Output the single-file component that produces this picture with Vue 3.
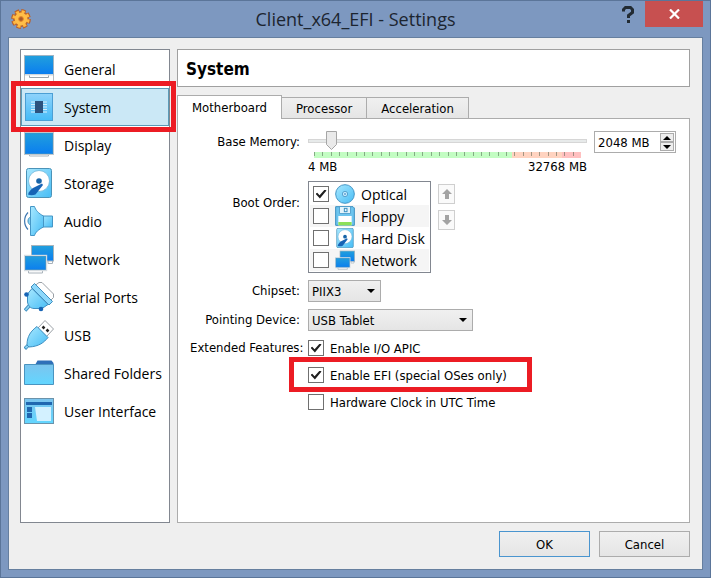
<script setup>
import { ref } from 'vue'

const sections = [
  { id: 'general', label: 'General' },
  { id: 'system', label: 'System' },
  { id: 'display', label: 'Display' },
  { id: 'storage', label: 'Storage' },
  { id: 'audio', label: 'Audio' },
  { id: 'network', label: 'Network' },
  { id: 'serial', label: 'Serial Ports' },
  { id: 'usb', label: 'USB' },
  { id: 'folder', label: 'Shared Folders' },
  { id: 'interface', label: 'User Interface' },
]
const activeSection = ref('system')

const tabs = ['Motherboard', 'Processor', 'Acceleration']
const activeTab = ref('Motherboard')

const memory = ref(2048)

const bootOrder = ref([
  { icon: 'optical', label: 'Optical', enabled: true },
  { icon: 'floppy', label: 'Floppy', enabled: false },
  { icon: 'storage', label: 'Hard Disk', enabled: false },
  { icon: 'network', label: 'Network', enabled: false },
])

const chipset = ref('PIIX3')
const pointing = ref('USB Tablet')

const features = ref([
  { label: 'Enable I/O APIC', enabled: true, marked: false },
  { label: 'Enable EFI (special OSes only)', enabled: true, marked: true },
  { label: 'Hardware Clock in UTC Time', enabled: false, marked: false },
])

function stepMemory(delta) {
  memory.value = Math.min(32768, Math.max(4, Number(memory.value) + delta))
}
</script>

<template>
  <div class="window">
    <svg class="sprite" aria-hidden="true">
      <defs>
        <linearGradient id="screen" x1="0" y1="0" x2="0" y2="1">
          <stop offset="0" stop-color="#22a0dc" />
          <stop offset="1" stop-color="#0a7df0" />
        </linearGradient>
        <linearGradient id="sky" x1="0" y1="0" x2="1" y2="1">
          <stop offset="0" stop-color="#a8e8ff" />
          <stop offset="1" stop-color="#48bdf5" />
        </linearGradient>
        <linearGradient id="skyDown" x1="0" y1="0" x2="0" y2="1">
          <stop offset="0" stop-color="#7cc4ee" />
          <stop offset="1" stop-color="#62d6ff" />
        </linearGradient>
        <linearGradient id="chip" x1="0" y1="0" x2="0" y2="1">
          <stop offset="0" stop-color="#8fd3fb" />
          <stop offset="1" stop-color="#44bbf7" />
        </linearGradient>
      </defs>
      <symbol id="general" viewBox="0 0 30 30">
        <rect x="0.5" y="19" width="29" height="10.5" fill="#fff" stroke="#b8bcc0" />
        <rect x="0.5" y="1.5" width="29" height="19" fill="url(#screen)" stroke="#9fb4c4" />
        <path d="M1 21h28" stroke="#dfe3e6" stroke-width="1.5" />
        <path d="M5.5 21.5v2h19v-2" fill="#fff" stroke="#9aa3ab" />
      </symbol>
      <symbol id="system" viewBox="0 0 30 30">
        <rect x="1.5" y="1.5" width="27" height="27" fill="url(#chip)" stroke="#4c9fd4" />
        <path d="M7 10h16M7 12.5h16M7 15h16M7 17.5h16M7 20h16" stroke="#d7effb" />
        <rect x="11" y="9" width="8" height="12" fill="#2d527d" />
      </symbol>
      <symbol id="display" viewBox="0 0 30 30">
        <path d="M5.500 23.5h19v2.500h-19z" fill="#fff" stroke="#a8b2ba" />
        <rect x="0.5" y="2.500" width="29" height="22" fill="url(#screen)" stroke="#c0c8cd" />
        <rect x="1.5" y="3.500" width="27" height="20" fill="none" stroke="#3c93ca" stroke-width="0.6" />
      </symbol>
      <symbol id="storage" viewBox="0 0 30 30">
        <rect x="2.5" y="0.5" width="25" height="29" rx="2" fill="url(#sky)" stroke="#4b93b8" />
        <circle cx="15" cy="13" r="10.5" fill="#fff" stroke="#6fb6da" stroke-width="0.8" />
        <path d="M18 15.500l1 1.500-7.500 9.500c-2.500 1-5.500 1-7.500 0 1-3 3-5.500 6-7z" fill="#1764b5" />
        <circle cx="15" cy="13" r="2.800" fill="#1764a8" />
      </symbol>
      <symbol id="audio" viewBox="0 0 30 30">
        <path d="M4 6.500C-.5 11-.5 19 4 23.500" fill="none" stroke="#3c76b0" stroke-width="1.200" />
        <path d="M7 11c-4 .5-4 7.500 0 8z" fill="#8bd3f2" stroke="#3f8fc0" />
        <path d="M18 10h10.500v11H18z" fill="url(#sky)" stroke="#4596c6" />
        <path d="M6.500.500h4c1 3.500 4 7 9 9.500v11c-5 2.500-8 5-9 8.500h-4z" fill="url(#sky)" stroke="#4596c6" />
      </symbol>
      <symbol id="network" viewBox="0 0 30 30">
        <path d="M24 16.500v3h4.500v-3" fill="#fff" stroke="#a8b2ba" />
        <rect x="7.500" y="1.500" width="22" height="15.500" fill="url(#screen)" stroke="#a8b4bc" />
        <path d="M4.500 26.500h14v2.500h-14z" fill="#fff" stroke="#a8b2ba" />
        <rect x="0.500" y="11.500" width="22" height="15" fill="url(#screen)" stroke="#d4dbe0" stroke-width="1.400" />
        <rect x="1.500" y="12.500" width="20" height="13" fill="none" stroke="#3c8cc0" stroke-width="0.600" />
      </symbol>
      <symbol id="serial" viewBox="0 0 30 30">
        <path d="M11 3.500l4-3h3L29.500 12v3.500l-4 4z" fill="#fff" stroke="#9aa0a6" />
        <path d="M5.500 23.500L1 28.500" stroke="#3f8fc0" stroke-width="3.500" />
        <path d="M5.500 23.500L1.500 28" stroke="#8bd3f2" stroke-width="1.800" />
        <path d="M8 6.500L24 22.500 18 26.500H10C6 26.500 4 23 3.500 20V12z" fill="url(#sky)" stroke="#3f8fc0" />
        <path d="M10.500 1.500L28.500 19.500l-3.500 3.500L7 5z" fill="#8dd8fb" stroke="#3f8fc0" />
        <circle cx="2.500" cy="12.500" r="2.300" fill="#1764b5" />
        <circle cx="17" cy="27" r="2.300" fill="#1764b5" />
      </symbol>
      <symbol id="usb" viewBox="0 0 30 30">
        <path d="M21 .500L29.500 9l-7 7.500L14 8z" fill="#fff" stroke="#9aa0a6" />
        <path d="M18.500 6.500l2 2M22.500 9.500l2 2" stroke="#222" stroke-width="2.500" />
        <path d="M4 25.500L.8 28.700" stroke="#3f8fc0" stroke-width="3.500" />
        <path d="M4 25.500L1.500 28" stroke="#8bd3f2" stroke-width="1.800" />
        <path d="M13 6.500L24 17.500c-4 5-9 9-19 9.500l-2-2C3 16 7 11 13 6.500z" fill="url(#sky)" stroke="#3f8fc0" />
      </symbol>
      <symbol id="folder" viewBox="0 0 30 30">
        <path d="M11 7l2.500-4.500h14l2 2.500v4H11z" fill="#2f6fb8" />
        <path d="M.5 6.500h29v20H.5z" fill="url(#skyDown)" stroke="#4a94c0" />
      </symbol>
      <symbol id="interface" viewBox="0 0 30 30">
        <rect x="0.5" y="2.500" width="29" height="25" fill="url(#skyDown)" stroke="#6b93ab" />
        <rect x="2" y="6" width="26" height="3" fill="#2067b0" />
        <rect x="3" y="11" width="5" height="5" fill="#2067b0" />
        <rect x="3" y="17" width="5" height="5" fill="#2067b0" />
        <path d="M11 11h16v14H13z" fill="#d3f1ff" />
      </symbol>
      <symbol id="optical" viewBox="0 0 30 30">
        <circle cx="15" cy="15" r="14" fill="url(#sky)" stroke="#4596c6" stroke-width="1.500" />
        <circle cx="15" cy="15" r="4" fill="#bfe9fb" stroke="#4596c6" stroke-width="1.200" />
        <circle cx="15" cy="15" r="1.200" fill="#2f6fb8" />
      </symbol>
      <symbol id="floppy" viewBox="0 0 30 30">
        <path d="M1 1h26l2 2v26H1z" fill="#6cc4ee" stroke="#3b8fc0" stroke-width="1.500" />
        <rect x="7" y="1" width="16" height="10" fill="#e3f4fc" stroke="#3b8fc0" />
        <rect x="14" y="3.500" width="4" height="5" fill="#e3f4fc" stroke="#3b8fc0" stroke-width="1.500" />
        <rect x="5" y="15" width="20" height="14" fill="#fff" />
        <rect x="5" y="24" width="20" height="5" fill="#8be05a" />
      </symbol>
    </svg>

    <header class="titlebar">
      <svg class="gear" viewBox="0 0 20 20" aria-hidden="true">
        <circle cx="10" cy="10" r="8" fill="#b9622c" />
        <circle cx="10" cy="10" r="8.200" fill="none" stroke="#b9622c" stroke-width="3.400" stroke-dasharray="4.400 2.040" />
        <circle cx="10" cy="10" r="7.200" fill="none" stroke="#ffb840" stroke-width="3" stroke-dasharray="3 2.655" stroke-dashoffset="-.4" />
        <circle cx="10" cy="10" r="6.400" fill="#ffbe48" />
        <circle cx="10" cy="10" r="2.400" fill="#a85a2a" stroke="#e88a2a" />
      </svg>
      <h1 class="title">Client_x64_EFI - Settings</h1>
      <div class="window-buttons">
        <button class="help" type="button" aria-label="Help">
          <svg viewBox="0 0 12 17" aria-hidden="true">
            <path d="M1.500 5.500V3.500L3.500 1.500h5l2 2v3L6.500 9.500V12M5 15.500h3" fill="none" stroke="#222b33" stroke-width="3" />
          </svg>
        </button>
        <button class="close" type="button" aria-label="Close">
          <svg viewBox="0 0 11 10" aria-hidden="true">
            <path d="M1 .500l9 9M10 .500l-9 9" stroke="#fff" stroke-width="2.200" />
          </svg>
        </button>
      </div>
    </header>

    <div class="client">
      <div class="body">
        <nav class="sidebar">
          <button
            v-for="s in sections"
            :key="s.id"
            type="button"
            :class="['section', { 'section--active': s.id === activeSection }]"
            @click="activeSection = s.id"
          >
            <svg class="section-icon" aria-hidden="true"><use :href="'#' + s.id" /></svg>
            <span>{{ s.label }}</span>
          </button>
        </nav>

        <main class="main">
          <h2 class="heading">System</h2>

          <div class="tabs" role="tablist">
            <button
              v-for="t in tabs"
              :key="t"
              type="button"
              role="tab"
              :aria-selected="t === activeTab"
              :class="['tab', { 'tab--active': t === activeTab }]"
              @click="activeTab = t"
            >
              {{ t }}
            </button>
          </div>

          <section class="panel">
            <label class="label" for="memory">Base Memory:</label>
            <div class="memory">
              <div class="memory-slider">
                <input id="memory" v-model="memory" class="range" type="range" min="4" max="32768" />
                <div class="scale">
                  <span v-for="n in 32" :key="n" class="tick"></span>
                </div>
                <div class="limits">
                  <span>4 MB</span>
                  <span>32768 MB</span>
                </div>
              </div>
              <div class="spin">
                <input class="spin-input" type="text" :value="memory + ' MB'" aria-label="Base memory size" />
                <div class="spin-buttons">
                  <button type="button" aria-label="Increase" @click="stepMemory(4)">
                    <svg viewBox="0 0 8 4" aria-hidden="true"><path d="M4 0l4 4H0z" /></svg>
                  </button>
                  <button type="button" aria-label="Decrease" @click="stepMemory(-4)">
                    <svg viewBox="0 0 8 4" aria-hidden="true"><path d="M0 0h8L4 4z" /></svg>
                  </button>
                </div>
              </div>
            </div>

            <span class="label label--boot">Boot Order:</span>
            <div class="boot">
              <div class="boot-list">
                <label v-for="d in bootOrder" :key="d.label" class="boot-item">
                  <input v-model="d.enabled" class="check" type="checkbox" />
                  <svg class="boot-icon" aria-hidden="true"><use :href="'#' + d.icon" /></svg>
                  <span>{{ d.label }}</span>
                </label>
              </div>
              <div class="boot-moves">
                <button type="button" class="move" aria-label="Move up">
                  <svg viewBox="0 0 10 10" aria-hidden="true"><path d="M5 0l5 5H7v5H3V5H0z" /></svg>
                </button>
                <button type="button" class="move" aria-label="Move down">
                  <svg viewBox="0 0 10 10" aria-hidden="true"><path d="M5 10l5-5H7V0H3v5H0z" /></svg>
                </button>
              </div>
            </div>

            <label class="label" for="chipset">Chipset:</label>
            <select id="chipset" v-model="chipset" class="select select--short">
              <option>PIIX3</option>
              <option>ICH9</option>
            </select>

            <label class="label" for="pointing">Pointing Device:</label>
            <select id="pointing" v-model="pointing" class="select">
              <option>USB Tablet</option>
              <option>PS/2 Mouse</option>
            </select>

            <span class="label label--features">Extended Features:</span>
            <div class="features">
              <label
                v-for="f in features"
                :key="f.label"
                :class="['feature', { 'feature--marked': f.marked }]"
              >
                <input v-model="f.enabled" class="check" type="checkbox" />
                <span>{{ f.label }}</span>
              </label>
            </div>
          </section>
        </main>
      </div>

      <footer class="actions">
        <button type="button" class="action action--default">OK</button>
        <button type="button" class="action">Cancel</button>
      </footer>
    </div>
  </div>
</template>

<style>
body {
  margin: 0;
}
</style>

<style scoped>
* {
  box-sizing: border-box;
}

.window {
  min-height: 100vh;
  display: flex;
  flex-direction: column;
  padding: 0 7px 7px;
  border: 1px solid #5b7599;
  background: #7d98c0;
  color: #000;
  font-family: "DejaVu Sans Condensed", "Noto Sans", sans-serif;
  font-size: 13px;
}

button,
input,
select {
  margin: 0;
  padding: 0;
  font: inherit;
  color: inherit;
}

.sprite {
  position: absolute;
  width: 0;
  height: 0;
}

.titlebar {
  height: 36px;
  display: grid;
  grid-template-columns: 1fr auto 1fr;
  align-items: center;
}

.gear {
  width: 20px;
  height: 20px;
  margin-left: 3px;
}

.title {
  margin: 0;
  font: 18px "Open Sans", sans-serif;
  color: #1c2530;
}

.window-buttons {
  align-self: start;
  display: flex;
  justify-content: flex-end;
  gap: 10px;
}

.help {
  width: 14px;
  height: 26px;
  display: grid;
  place-items: center;
  border: 0;
  background: none;
}

.help svg {
  width: 12px;
  height: 17px;
}

.close {
  width: 58px;
  height: 26px;
  display: grid;
  place-items: center;
  border: 0;
  background: #c75050;
}

.close svg {
  width: 11px;
  height: 10px;
}

.client {
  flex: 1;
  display: flex;
  flex-direction: column;
  gap: 8px;
  padding: 11px 12px 12px 11px;
  border: 1px solid #667f9f;
  background: #efefef;
}

.body {
  flex: 1;
  display: grid;
  grid-template-columns: 150px minmax(0, 1fr);
  gap: 7px;
}

.sidebar {
  border: 1px solid #828790;
  background: #fff;
}

.section {
  position: relative;
  width: 100%;
  height: 38px;
  display: flex;
  align-items: center;
  gap: 10px;
  padding: 0 2px;
  border: 1px solid transparent;
  background: none;
  font-family: "Open Sans", sans-serif;
  font-size: 14px;
  white-space: nowrap;
}

.section--active {
  border-color: #5c9bb8;
  background: #cbe8f6;
}

.section--active::after {
  content: "";
  position: absolute;
  z-index: 1;
  inset: -8px -8px -7px -11px;
  border: 5px solid #ec1c24;
}

.section-icon {
  flex: none;
  width: 30px;
  height: 30px;
}

.main {
  display: flex;
  flex-direction: column;
}

.heading {
  height: 38px;
  margin: 0 0 8px;
  padding: 0 8px;
  border: 1px solid #a0a0a0;
  background: #fff;
  font-size: 17px;
  line-height: 38px;
}

.tabs {
  display: flex;
  align-items: flex-end;
}

.tab {
  height: 21px;
  margin-right: -1px;
  padding: 0 14px;
  border: 1px solid #acacac;
  border-bottom: 0;
  background: linear-gradient(#f0f0f0, #e5e5e5);
}

.tab--active {
  position: relative;
  height: 24px;
  margin-bottom: -1px;
  background: #fff;
}

.panel {
  flex: 1;
  display: grid;
  grid-template-columns: 110px minmax(0, 1fr);
  align-content: start;
  gap: 7px 8px;
  padding: 12px 13px 12px 12px;
  border: 1px solid #acacac;
  background: #fff;
}

.label {
  line-height: 22px;
  text-align: right;
  white-space: nowrap;
}

.label--boot {
  padding-top: 11px;
}

.label--features {
  line-height: 20px;
}

.memory {
  display: flex;
  align-items: flex-start;
  gap: 7px;
}

.memory-slider {
  flex: 1;
}

.range {
  appearance: none;
  display: block;
  width: 100%;
  height: 20px;
  background: none;
}

.range::-webkit-slider-runnable-track {
  height: 4px;
  border: 1px solid #d6d6d6;
  background: #e7eaea;
}

.range::-webkit-slider-thumb {
  appearance: none;
  width: 11px;
  height: 19px;
  margin-top: -9px;
  background: url("data:image/svg+xml,%3Csvg xmlns='http://www.w3.org/2000/svg' viewBox='0 0 11 19'%3E%3Cpath d='M.5.5h10v13l-5 5-5-5z' fill='%23eaeaea' stroke='%23a6a6a6'/%3E%3C/svg%3E");
}

.scale {
  display: flex;
  height: 6px;
  margin: 1px 6px 0;
  background: linear-gradient(90deg, #c3fdc3 0 74%, #ffd3c0 74% 93%, #ffc0c0 93%);
}

.tick {
  flex: 1;
  height: 4px;
  border-left: 1px solid rgba(70, 90, 70, 0.5);
}

.limits {
  display: flex;
  justify-content: space-between;
  padding-top: 1px;
  line-height: 15px;
}

.spin {
  width: 82px;
  height: 22px;
  display: flex;
  padding: 1px;
  border: 1px solid #acacac;
}

.spin-input {
  flex: 1;
  min-width: 0;
  padding-left: 2px;
  border: 0;
  background: none;
}

.spin-buttons {
  width: 14px;
  display: flex;
  flex-direction: column;
}

.spin-buttons button {
  flex: 1;
  display: grid;
  place-items: center;
  border: 1px solid #acacac;
  background: #eee;
}

.spin-buttons svg {
  width: 8px;
  height: 4px;
}

.boot {
  display: flex;
  align-items: flex-start;
  gap: 7px;
}

.boot-list {
  width: 123px;
  padding: 1px;
  border: 1px solid #828790;
}

.boot-item {
  height: 22px;
  display: flex;
  align-items: center;
  gap: 6px;
  padding-left: 3px;
  font-family: "Open Sans", sans-serif;
  font-size: 14px;
  white-space: nowrap;
}

.boot-item:nth-child(even) {
  background: #f5f5f5;
}

.boot-icon {
  flex: none;
  width: 20px;
  height: 20px;
}

.boot-moves {
  display: flex;
  flex-direction: column;
  gap: 6px;
  padding-top: 3px;
}

.move {
  width: 17px;
  height: 20px;
  display: grid;
  place-items: center;
  border: 1px solid #cfcfcf;
  background: #fafafa;
}

.move svg {
  width: 10px;
  height: 10px;
  fill: #a3a3a3;
}

.check {
  appearance: none;
  flex: none;
  width: 16px;
  height: 16px;
  display: grid;
  place-items: center;
  border: 1px solid #707070;
  background: #fff;
}

.check:checked::before {
  content: "";
  width: 11px;
  height: 9px;
  background: #1f1f1f;
  clip-path: polygon(0 48%, 16% 36%, 37% 64%, 84% 0, 100% 12%, 40% 100%);
}

.select {
  appearance: none;
  width: 165px;
  height: 22px;
  padding: 0 3px;
  border: 1px solid #acacac;
  border-radius: 0;
  background:
    url("data:image/svg+xml,%3Csvg xmlns='http://www.w3.org/2000/svg' width='8' height='4'%3E%3Cpath d='M0 0h8L4 4z'/%3E%3C/svg%3E") no-repeat right 5px center,
    linear-gradient(#f0f0f0, #e5e5e5);
}

.select--short {
  width: 73px;
}

.features {
  display: flex;
  flex-direction: column;
  align-items: flex-start;
  gap: 7px;
}

.feature {
  position: relative;
  height: 20px;
  display: flex;
  align-items: center;
  gap: 6px;
}

.feature--marked::after {
  content: "";
  position: absolute;
  inset: -8px -25px -7px -19px;
  border: 5px solid #ec1c24;
}

.actions {
  display: flex;
  justify-content: flex-end;
  gap: 9px;
}

.action {
  width: 91px;
  height: 26px;
  border: 1px solid #acacac;
  background: linear-gradient(#f0f0f0, #e5e5e5);
}

.action--default {
  border-color: #4a95cf;
}
</style>
